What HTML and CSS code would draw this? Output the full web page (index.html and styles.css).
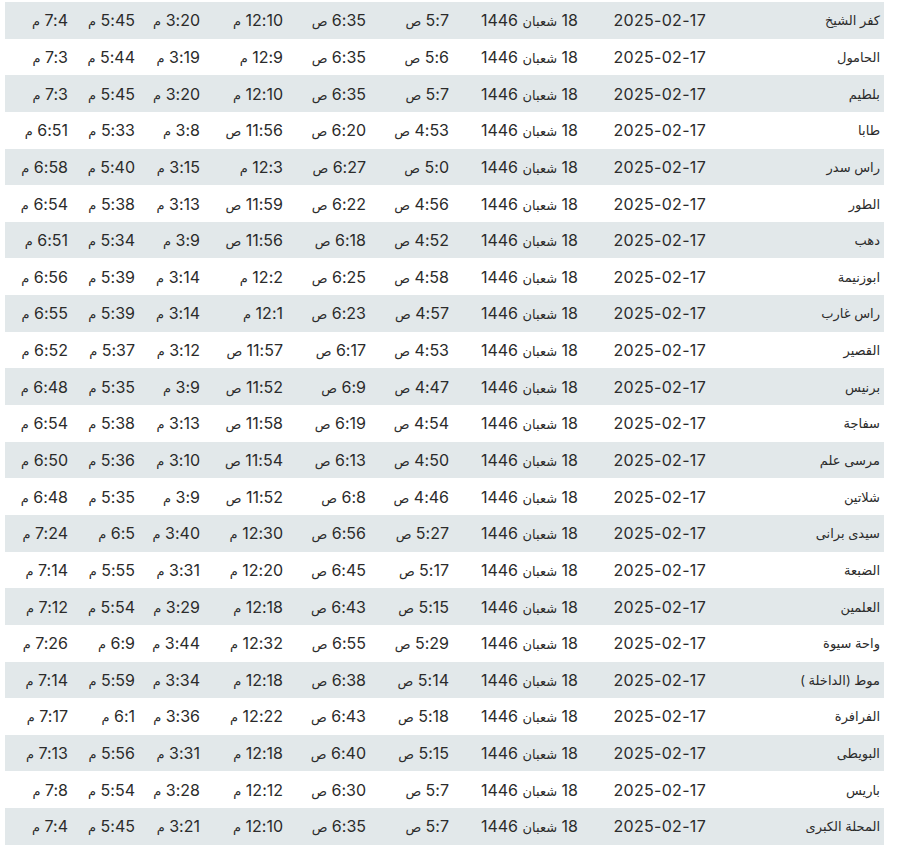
FILE: index.html
```html
<!DOCTYPE html>
<html lang="ar" dir="rtl">
  <head>
    <meta charset="UTF-8" />
    <meta name="viewport" content="width=device-width, initial-scale=1.0" />
    <title>مواقيت الصلاة</title>
    <link rel="stylesheet" href="styles.css">
  </head>
  <body>
    <main class="times-wrap">
      <table class="times-table">
        <colgroup>
          <col class="col-city" />
          <col class="col-date" />
          <col class="col-hijri" />
          <col class="col-t1" />
          <col class="col-t1" />
          <col class="col-t1" />
          <col class="col-t2" />
          <col class="col-t3" />
          <col class="col-t3" />
        </colgroup>
        <tbody>
          <tr><td class="city">كفر الشيخ</td><td>2025-02-17</td><td>18 <span class="ar">شعبان</span> 1446</td><td>5:7 <span class="ar">ص</span></td><td>6:35 <span class="ar">ص</span></td><td>12:10 <span class="ar">م</span></td><td>3:20 <span class="ar">م</span></td><td>5:45 <span class="ar">م</span></td><td>7:4 <span class="ar">م</span></td></tr>
          <tr><td class="city">الحامول</td><td>2025-02-17</td><td>18 <span class="ar">شعبان</span> 1446</td><td>5:6 <span class="ar">ص</span></td><td>6:35 <span class="ar">ص</span></td><td>12:9 <span class="ar">م</span></td><td>3:19 <span class="ar">م</span></td><td>5:44 <span class="ar">م</span></td><td>7:3 <span class="ar">م</span></td></tr>
          <tr><td class="city">بلطيم</td><td>2025-02-17</td><td>18 <span class="ar">شعبان</span> 1446</td><td>5:7 <span class="ar">ص</span></td><td>6:35 <span class="ar">ص</span></td><td>12:10 <span class="ar">م</span></td><td>3:20 <span class="ar">م</span></td><td>5:45 <span class="ar">م</span></td><td>7:3 <span class="ar">م</span></td></tr>
          <tr><td class="city">طابا</td><td>2025-02-17</td><td>18 <span class="ar">شعبان</span> 1446</td><td>4:53 <span class="ar">ص</span></td><td>6:20 <span class="ar">ص</span></td><td>11:56 <span class="ar">ص</span></td><td>3:8 <span class="ar">م</span></td><td>5:33 <span class="ar">م</span></td><td>6:51 <span class="ar">م</span></td></tr>
          <tr><td class="city">راس سدر</td><td>2025-02-17</td><td>18 <span class="ar">شعبان</span> 1446</td><td>5:0 <span class="ar">ص</span></td><td>6:27 <span class="ar">ص</span></td><td>12:3 <span class="ar">م</span></td><td>3:15 <span class="ar">م</span></td><td>5:40 <span class="ar">م</span></td><td>6:58 <span class="ar">م</span></td></tr>
          <tr><td class="city">الطور</td><td>2025-02-17</td><td>18 <span class="ar">شعبان</span> 1446</td><td>4:56 <span class="ar">ص</span></td><td>6:22 <span class="ar">ص</span></td><td>11:59 <span class="ar">ص</span></td><td>3:13 <span class="ar">م</span></td><td>5:38 <span class="ar">م</span></td><td>6:54 <span class="ar">م</span></td></tr>
          <tr><td class="city">دهب</td><td>2025-02-17</td><td>18 <span class="ar">شعبان</span> 1446</td><td>4:52 <span class="ar">ص</span></td><td>6:18 <span class="ar">ص</span></td><td>11:56 <span class="ar">ص</span></td><td>3:9 <span class="ar">م</span></td><td>5:34 <span class="ar">م</span></td><td>6:51 <span class="ar">م</span></td></tr>
          <tr><td class="city">ابوزنيمة</td><td>2025-02-17</td><td>18 <span class="ar">شعبان</span> 1446</td><td>4:58 <span class="ar">ص</span></td><td>6:25 <span class="ar">ص</span></td><td>12:2 <span class="ar">م</span></td><td>3:14 <span class="ar">م</span></td><td>5:39 <span class="ar">م</span></td><td>6:56 <span class="ar">م</span></td></tr>
          <tr><td class="city">راس غارب</td><td>2025-02-17</td><td>18 <span class="ar">شعبان</span> 1446</td><td>4:57 <span class="ar">ص</span></td><td>6:23 <span class="ar">ص</span></td><td>12:1 <span class="ar">م</span></td><td>3:14 <span class="ar">م</span></td><td>5:39 <span class="ar">م</span></td><td>6:55 <span class="ar">م</span></td></tr>
          <tr><td class="city">القصير</td><td>2025-02-17</td><td>18 <span class="ar">شعبان</span> 1446</td><td>4:53 <span class="ar">ص</span></td><td>6:17 <span class="ar">ص</span></td><td>11:57 <span class="ar">ص</span></td><td>3:12 <span class="ar">م</span></td><td>5:37 <span class="ar">م</span></td><td>6:52 <span class="ar">م</span></td></tr>
          <tr><td class="city">برنيس</td><td>2025-02-17</td><td>18 <span class="ar">شعبان</span> 1446</td><td>4:47 <span class="ar">ص</span></td><td>6:9 <span class="ar">ص</span></td><td>11:52 <span class="ar">ص</span></td><td>3:9 <span class="ar">م</span></td><td>5:35 <span class="ar">م</span></td><td>6:48 <span class="ar">م</span></td></tr>
          <tr><td class="city">سفاجة</td><td>2025-02-17</td><td>18 <span class="ar">شعبان</span> 1446</td><td>4:54 <span class="ar">ص</span></td><td>6:19 <span class="ar">ص</span></td><td>11:58 <span class="ar">ص</span></td><td>3:13 <span class="ar">م</span></td><td>5:38 <span class="ar">م</span></td><td>6:54 <span class="ar">م</span></td></tr>
          <tr><td class="city">مرسى علم</td><td>2025-02-17</td><td>18 <span class="ar">شعبان</span> 1446</td><td>4:50 <span class="ar">ص</span></td><td>6:13 <span class="ar">ص</span></td><td>11:54 <span class="ar">ص</span></td><td>3:10 <span class="ar">م</span></td><td>5:36 <span class="ar">م</span></td><td>6:50 <span class="ar">م</span></td></tr>
          <tr><td class="city">شلاتين</td><td>2025-02-17</td><td>18 <span class="ar">شعبان</span> 1446</td><td>4:46 <span class="ar">ص</span></td><td>6:8 <span class="ar">ص</span></td><td>11:52 <span class="ar">ص</span></td><td>3:9 <span class="ar">م</span></td><td>5:35 <span class="ar">م</span></td><td>6:48 <span class="ar">م</span></td></tr>
          <tr><td class="city">سيدى برانى</td><td>2025-02-17</td><td>18 <span class="ar">شعبان</span> 1446</td><td>5:27 <span class="ar">ص</span></td><td>6:56 <span class="ar">ص</span></td><td>12:30 <span class="ar">م</span></td><td>3:40 <span class="ar">م</span></td><td>6:5 <span class="ar">م</span></td><td>7:24 <span class="ar">م</span></td></tr>
          <tr><td class="city">الضبعة</td><td>2025-02-17</td><td>18 <span class="ar">شعبان</span> 1446</td><td>5:17 <span class="ar">ص</span></td><td>6:45 <span class="ar">ص</span></td><td>12:20 <span class="ar">م</span></td><td>3:31 <span class="ar">م</span></td><td>5:55 <span class="ar">م</span></td><td>7:14 <span class="ar">م</span></td></tr>
          <tr><td class="city">العلمين</td><td>2025-02-17</td><td>18 <span class="ar">شعبان</span> 1446</td><td>5:15 <span class="ar">ص</span></td><td>6:43 <span class="ar">ص</span></td><td>12:18 <span class="ar">م</span></td><td>3:29 <span class="ar">م</span></td><td>5:54 <span class="ar">م</span></td><td>7:12 <span class="ar">م</span></td></tr>
          <tr><td class="city">واحة سيوة</td><td>2025-02-17</td><td>18 <span class="ar">شعبان</span> 1446</td><td>5:29 <span class="ar">ص</span></td><td>6:55 <span class="ar">ص</span></td><td>12:32 <span class="ar">م</span></td><td>3:44 <span class="ar">م</span></td><td>6:9 <span class="ar">م</span></td><td>7:26 <span class="ar">م</span></td></tr>
          <tr><td class="city">موط (الداخلة )</td><td>2025-02-17</td><td>18 <span class="ar">شعبان</span> 1446</td><td>5:14 <span class="ar">ص</span></td><td>6:38 <span class="ar">ص</span></td><td>12:18 <span class="ar">م</span></td><td>3:34 <span class="ar">م</span></td><td>5:59 <span class="ar">م</span></td><td>7:14 <span class="ar">م</span></td></tr>
          <tr><td class="city">الفرافرة</td><td>2025-02-17</td><td>18 <span class="ar">شعبان</span> 1446</td><td>5:18 <span class="ar">ص</span></td><td>6:43 <span class="ar">ص</span></td><td>12:22 <span class="ar">م</span></td><td>3:36 <span class="ar">م</span></td><td>6:1 <span class="ar">م</span></td><td>7:17 <span class="ar">م</span></td></tr>
          <tr><td class="city">البويطى</td><td>2025-02-17</td><td>18 <span class="ar">شعبان</span> 1446</td><td>5:15 <span class="ar">ص</span></td><td>6:40 <span class="ar">ص</span></td><td>12:18 <span class="ar">م</span></td><td>3:31 <span class="ar">م</span></td><td>5:56 <span class="ar">م</span></td><td>7:13 <span class="ar">م</span></td></tr>
          <tr><td class="city">باريس</td><td>2025-02-17</td><td>18 <span class="ar">شعبان</span> 1446</td><td>5:7 <span class="ar">ص</span></td><td>6:30 <span class="ar">ص</span></td><td>12:12 <span class="ar">م</span></td><td>3:28 <span class="ar">م</span></td><td>5:54 <span class="ar">م</span></td><td>7:8 <span class="ar">م</span></td></tr>
          <tr><td class="city">المحلة الكبرى</td><td>2025-02-17</td><td>18 <span class="ar">شعبان</span> 1446</td><td>5:7 <span class="ar">ص</span></td><td>6:35 <span class="ar">ص</span></td><td>12:10 <span class="ar">م</span></td><td>3:21 <span class="ar">م</span></td><td>5:45 <span class="ar">م</span></td><td>7:4 <span class="ar">م</span></td></tr>
        </tbody>
      </table>
    </main>
  </body>
</html>
```

FILE: styles.css
```css
  :root {
    --stripe: #e2e8ea;
    --dark-text: #2b2b2b;
  }
  * { box-sizing: border-box; margin: 0; padding: 0; }
  html, body { background: #fff; color: var(--dark-text); font-family: "Inter", "DejaVu Sans", sans-serif; }
  .times-wrap { padding: 2px 29px 0 5px; }
  .times-table { width: 879px; border-collapse: collapse; table-layout: fixed; font-size: 16px; letter-spacing: 0.3px; }
  .times-table td { height: 36.65px; padding: 0 4px; text-align: right; vertical-align: middle; white-space: nowrap; }
  .times-table tr:nth-child(odd) { background: var(--stripe); }
  .times-table td.city { font-size: 13px; letter-spacing: 0; }
  .times-table .ar { font-size: 13px; letter-spacing: 0; }

  .col-city { width: 174px; }
  .col-date { width: 128px; }
  .col-hijri { width: 129px; }
  .col-t1 { width: 83px; }
  .col-t2 { width: 65px; }
  .col-t3 { width: 67px; }
```
